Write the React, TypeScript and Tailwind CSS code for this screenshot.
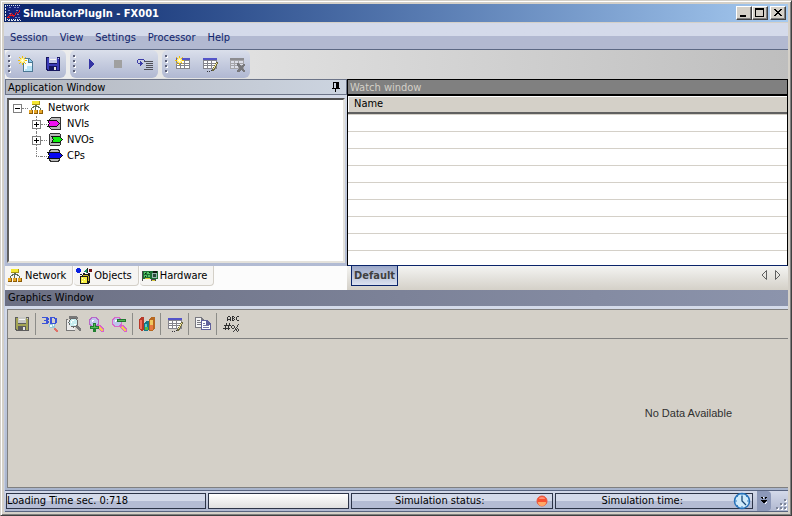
import React from "react";

const menus = ["Session", "View", "Settings", "Processor", "Help"];

const Icon = ({ children, className = "size-4" }: { children: React.ReactNode; className?: string }) => (
  <svg viewBox="0 0 16 16" className={`shrink-0 ${className}`} shapeRendering="crispEdges" aria-hidden="true">
    {children}
  </svg>
);

const Logo = () => (
  <Icon>
    <rect x="2" y="1" width="14" height="13" fill="#14247c" />
    <path d="M0 .5h16M0 14.5h16" stroke="#dfe3f0" strokeDasharray="1 1" />
    <path d="M.5 0v16M2.5 15.5h13" stroke="#dfe3f0" strokeDasharray="2 1" />
    <path d="M4 2.5h3M9 2.5h6M3 5.5h3M11 5.5h4M4 8.5h2M12 9.5h3M10 12.5h5" stroke="#7484c4" strokeDasharray="2 1" />
    <path d="M2 12h1v1H2zM3 11h1v1H3zM4 10h1v1H4zM5 9h1v1H5zM6 8h1v1H6zM7 9h1v2H7zM8 11h1v1H8zM9 10h1v1H9zM10 8h1v2h-1zM11 7h1v1h-1zM12 8h1v1h-1zM13 7h1v1h-1zM14 5h1v2h-1zM3 12h2v1H3zM5 10h2v1H5zM8 10h1v1H8z" fill="#f01818" />
  </Icon>
);

const Spark = () => (
  <>
    <path d="M4 0h1v9H4zM0 4h9v1H0z" fill="#f0c000" />
    <path d="M1 1h1v1H1zM2 2h1v1H2zM6 2h1v1H6zM7 1h1v1H7zM2 6h1v1H2zM1 7h1v1H1zM6 6h1v1H6zM7 7h1v1H7z" fill="#e8b820" />
    <path d="M3 2h3v5H3zM2 3h5v3H2z" fill="#fff080" />
    <path d="M4 3h1v3H4zM3 4h3v1H3z" fill="#fffde0" />
  </>
);

const NewIcon = () => (
  <Icon>
    <path d="M5 2h6l4 4v10H5z" fill="#4c7894" />
    <path d="M6 3h4v4h4v8H6z" fill="#f2fbff" />
    <path d="M9 10h5v5H7v-2h2z" fill="#b8e4f8" />
    <path d="M11 3l3 3h-3z" fill="#8cc8e8" />
    <Spark />
  </Icon>
);

const SaveIcon = ({ frame = "#16165e", body = "#3c3cb8", label = "#c8cce8" }) => (
  <Icon>
    <path d="M1 1h14v14H2l-1-1z" fill={frame} />
    <path d="M2 2h12v12H3l-1-1z" fill={body} />
    <path d="M4 1h8v7H4z" fill={frame} />
    <path d="M4 1h8v6H4z" fill={label} />
    <path d="M5 3h6v1H5z" fill="#f4f4f4" />
    <path d="M4 10h8v5H4z" fill={frame} />
    <path d="M9 11h2v3H9z" fill="#e4e4e4" />
    <path d="M13 2h1v1h-1z" fill="#d0d0e8" />
  </Icon>
);

const PlayIcon = () => (
  <Icon>
    <path d="M6 3l5 5-5 5z" fill="#3434a4" />
  </Icon>
);

const StopIcon = () => (
  <Icon>
    <path d="M4 4h8v8H4z" fill="#a0a0a0" />
  </Icon>
);

const StepIcon = () => (
  <Icon>
    <path d="M1 3h6v1H1zM0 4h1v3H0zM1 7h5v1H1zM3 5h1v5H3zM4 6h1v3H4zM7 4h1v1H7z" fill="#3c3ca8" />
    <path d="M7 5h9v1H7zM9 7h7v1H9zM9 9h7v1H9zM9 11h7v1H9zM7 13h9v1H7z" fill="#505058" />
  </Icon>
);

const Grid = ({ line = "#84848c", head = "#5454c8", cell = "#fff" }) => (
  <>
    <path d="M1 2h14v11H1z" fill={line} />
    <path d="M1 2h14v2H1z" fill={head} />
    <path
      d="M2 5h3v2H2zM6 5h3v2H6zM10 5h4v2h-4zM2 8h3v1H2zM6 8h3v1H6zM10 8h4v1h-4zM2 10h3v2H2zM6 10h3v2H6zM10 10h4v2h-4z"
      fill={cell}
    />
  </>
);

const TableNewIcon = () => (
  <Icon>
    <Grid />
    <Spark />
  </Icon>
);

const TableEditIcon = () => (
  <Icon>
    <Grid />
    <path d="M14 6h2v2h-1v2h-1v2h-1v2h-1v1h-2v-2h1v-2h1V9h1V7h1z" fill="#6c6840" />
    <path d="M14 7h1v1h-1zM13 8h1v2h-1zM12 10h1v2h-1zM11 12h1v1h-1z" fill="#f0e498" />
    <path d="M5 15h1v1H5zM7 15h1v1H7zM9 14h1v1H9z" fill="#34343c" />
  </Icon>
);

const TableDeleteIcon = () => (
  <Icon>
    <Grid line="#a4a4a8" head="#8c8c90" cell="#dcdee8" />
    <path
      d="M8 7h2v1h1v1h1v1h1V9h1V8h2v2h-1v1h-1v2h1v1h1v2h-2v-1h-1v-1h-1v1h-1v1H8v-2h1v-1h1v-2H9v-1H8z"
      fill="#78787c"
    />
  </Icon>
);

const NetworkIcon = () => (
  <Icon>
    <path d="M7 5h2v2H7zM5 6h2v1H5zM9 6h2v1H9zM4 7h1v1H4zM11 7h1v1h-1zM7 7h1v3H7zM3 8h1v2H3zM12 8h1v2h-1zM5 7h1v1H5zM10 7h1v1h-1z" fill="#5c6c58" />
    <path d="M4 1h8v4H4z" fill="#a89410" />
    <path d="M4 1h7v3H4z" fill="#f4e830" />
    <path d="M1 10h4v4H1zM6 10h4v4H6zM11 10h4v4h-4z" fill="#8c5c08" />
    <path d="M1 10h3v3H1zM6 10h3v3H6zM11 10h3v3h-3z" fill="#e8a828" />
  </Icon>
);

const boxes: Record<string, string> = {
  in: "M4.5 1.5h9v12h-9l-2-2v-8z",
  out: "M2.500 2.500l1-1h9l1 1v10l-1 1h-9l-1-1z",
  cp: "M3.5 1.5h8l1 2v8l-1 2h-8l-1-2v-8z",
};

const arrows: Record<string, string> = {
  in: "M.5 4.500h9L12.500 7.500l-3 3H.5l2-3z",
  out: "M4.5 4.500h8l3 3-3 3h-8l2-3z",
  cp: "M.5 4.500h12l3 3-3 3H.5l2-3z",
};

const VarIcon = ({ fill, kind }: { fill: string; kind: string }) => (
  <Icon>
    <path d={boxes[kind]} fill="#b8b8b8" stroke="#303030" />
    <path d={arrows[kind]} fill={fill} stroke="#101010" />
  </Icon>
);

const ObjectsIcon = () => (
  <Icon>
    <path d="M1 0h3v1h1v3H4v1H1V4H0V1h1z" fill="#0820e0" />
    <path d="M10 1h1v4h-1zM9 2h1v2H9zM8 3h1v1H8z" fill="#189060" />
    <path d="M11 0h1v5h-1z" fill="#202020" />
    <path d="M13 1h3v3h-3z" fill="#701010" />
    <path d="M4 6h2v1H4zM7 5h2v2H7zM12 5h2v2h-2z" fill="#202020" />
    <path d="M5 8l2-2h7v8l-2 2H4V8z" fill="#181818" />
    <path d="M5 9h6v6H5z" fill="#f8f040" />
    <path d="M7 7h5l-1 1H6zM12 8h1v5h-1z" fill="#c8b820" />
    <path d="M6 10h1v1H6zM8 11h1v1H8zM6 13h1v1H6z" fill="#fffce0" />
  </Icon>
);

const HardwareIcon = () => (
  <Icon>
    <path d="M1 3h15v8H1z" fill="#1c7034" />
    <path d="M0 3h1v10H0zM9 11h5v2H9z" fill="#484848" />
    <path d="M2 4h2v2H2zM5 4h3v2H5zM2 7h3v2H2zM6 7h2v2H6z" fill="#58c468" />
    <path d="M3 5h1v1H3zM7 4h1v1H7zM3 8h1v1H3zM11 3h4v2h-4z" fill="#101810" />
    <path d="M10 5h5v5h-5z" fill="#98b8b0" />
    <path d="M11 6h3v3h-3z" fill="#284838" />
    <path d="M3 10h5v1H3zM10 12h3v1h-3z" fill="#d8c838" />
  </Icon>
);

const Lens = ({ ring }: { ring: string }) => (
  <>
    <circle cx="6" cy="6" r="4.5" fill="#c0c4ec" stroke={ring} strokeWidth="1.5" />
    <path d="M4 4h2v1H5v1H4z" fill="#fff" />
  </>
);

const ThreeDIcon = () => (
  <Icon>
    <path d="M0 1h6v1H0zM4 2h3v2H4zM2 4h4v1H2zM4 5h3v2H4zM0 7h6v1H0zM8 1h5v1H8zM8 2h2v6H8zM12 2h3v1h-3zM13 3h2v4h-2zM10 7h4v1h-4z" fill="#3c54d8" />
    <path d="M7 8h6v4H9l-2-1z" fill="#98c8d8" />
    <path d="M8 9h2v2H8zM11 8h1v2h-1z" fill="#f0ffff" />
    <path d="M12 12h2v1h1v1h1v2h-2v-1h-1v-1h-1z" fill="#e07068" />
  </Icon>
);

const ZoomIcon = () => (
  <Icon>
    <path d="M1 3h2v11h7v1H1zM4 0h7l2 2v1H4z" fill="#787878" />
    <path d="M2 4h8v10H2z" fill="#ececec" />
    <circle cx="8.5" cy="6.5" r="4.5" fill="#c8eef0" stroke="#686868" />
    <path d="M7 4h2v1H7zM6 5h1v2H6zM9 8h2v1H9z" fill="#fff" />
    <path d="M12 9l4 4v2h-2l-3-4z" fill="#787878" />
  </Icon>
);

const ZoomInIcon = () => (
  <Icon>
    <Lens ring="#b868c8" />
    <path d="M9 9h3l4 4v2l-1 1h-2l-4-4z" fill="#d860d0" />
    <path d="M11 10l4 4-1 1-4-3z" fill="#f4c850" />
    <path d="M5 7h3v3h3v3H8v3H5v-3H2v-3h3z" fill="#208030" />
    <path d="M6 8h1v3h3v1H3v-1h3z" fill="#58b858" />
  </Icon>
);

const ZoomOutIcon = () => (
  <Icon>
    <Lens ring="#d868c8" />
    <path d="M9 9h3l4 4v2l-1 1h-2l-4-4z" fill="#d860d0" />
    <path d="M11 10l4 4-1 1-4-3z" fill="#f4c850" />
    <path d="M6 3h9v3H6z" fill="#207830" />
    <path d="M7 4h7v1H7z" fill="#58b858" />
  </Icon>
);

const ChartIcon = () => (
  <Icon>
    <path d="M0 3l2-2h3v12l-2 2-3-2z" fill="#b83828" />
    <path d="M1 4h2v9H1z" fill="#f07060" />
    <path d="M5 7l2-2h3v9l-2 1H5z" fill="#187888" />
    <path d="M6 8h2v6H6z" fill="#58c8d8" />
    <path d="M6 11h3v3H6z" fill="#58b840" />
    <path d="M10 3l2-2h4v11l-3 3h-3z" fill="#b86820" />
    <path d="M11 4h3v5h-3z" fill="#f0c860" />
    <path d="M11 9h3v5h-3z" fill="#e87840" />
  </Icon>
);

const CopyIcon = () => (
  <Icon>
    <path d="M0 1h6l3 3v8H0z" fill="#787880" />
    <path d="M1 2h5v3h2v6H1z" fill="#f4f4f4" />
    <path d="M2 4h3v1H2zM2 6h4v1H2zM2 8h4v1H2z" fill="#787880" />
    <path d="M6 4h6l4 4v6H6z" fill="#60609c" />
    <path d="M7 5h4v4h4v4H7z" fill="#fff" />
    <path d="M8 7h2v1H8zM8 9h6v1H8zM8 11h6v1H8z" fill="#7878a8" />
  </Icon>
);

// number format: small caps over a hash and a percent sign
const FormatIcon = () => (
  <Icon>
    <path
      d="M5 0h2v1H5zM4 1h1v4H4zM7 1h1v4H7zM5 3h2v1H5zM9 0h2v1H9zM9 1h1v4H9zM11 1h1v1h-1zM10 2h1v1h-1zM11 3h1v1h-1zM10 4h1v1h-1zM14 0h2v1h-2zM13 1h1v3h-1zM14 4h2v1h-2z"
      fill="#303030"
    />
    <path d="M1 9h7v1H1zM0 12h7v1H0zM3 7h1v3H3zM2 10h1v4H2zM6 7h1v3H6zM5 10h1v4H5z" fill="#303030" />
    <path d="M9 9h2v1H9zM9 12h2v1H9zM8 10h1v2H8zM11 10h1v2h-1zM15 8h1v1h-1zM14 9h1v2h-1zM13 11h1v1h-1zM12 12h1v2h-1zM11 14h1v1h-1zM10 15h1v1h-1zM14 12h1v1h-1zM14 15h1v1h-1zM13 13h1v2h-1zM15 13h1v2h-1z" fill="#404040" />
  </Icon>
);

const PinIcon = () => (
  <svg width="8" height="11" viewBox="0 0 8 11" shapeRendering="crispEdges" aria-hidden="true">
    <path d="M1 0h6v6h1v1H4v3H3V7H0V6h1zM2 1v5h2V1z" fillRule="evenodd" />
  </svg>
);

const ClockIcon = () => (
  <svg viewBox="0 0 18 18" className="size-[18px]" aria-hidden="true">
    <circle cx="9" cy="9" r="7.5" fill="#cfeafa" stroke="#2470b8" strokeWidth="1.5" />
    <path d="M9 2v2M9 14v2M2 9h2M14 9h2M4 4l1 1M14 4l-1 1M4 14l1-1" stroke="#3c84c4" />
    <path d="M9 4v5l4 4" fill="none" stroke="#184878" strokeWidth="1.3" />
  </svg>
);

const Grip = () => (
  <svg width="4" height="19" viewBox="0 0 4 19" shapeRendering="crispEdges" className="shrink-0" aria-hidden="true">
    <path d="M1 1h2v2H1zM1 6h2v2H1zM1 11h2v2H1zM1 16h2v2H1z" fill="#fff" />
    <path d="M0 0h2v2H0zM0 5h2v2H0zM0 10h2v2H0zM0 15h2v2H0z" fill="#5c6078" />
  </svg>
);

const ToolButton = ({ label, children }: { label: string; children: React.ReactNode }) => (
  <button aria-label={label} className="flex h-6 w-[27px] items-center justify-center">
    {children}
  </button>
);

const ToolGroup = ({ children }: { children: React.ReactNode }) => (
  <div className="flex h-7 items-center rounded-md bg-linear-to-b from-[#dadfeb] to-[#b0b8d2] pl-[3px]">
    <Grip />
    {children}
  </div>
);

const GraphButton = ({ label, children }: { label: string; children: React.ReactNode }) => (
  <button aria-label={label} className="flex h-6 w-[23px] items-center justify-center">
    {children}
  </button>
);

const Divider = () => <span className="mx-[2px] h-[22px] w-px bg-[#8c8c88]" />;

const WindowButton = ({ label, d }: { label: string; d: string }) => (
  <button
    aria-label={label}
    className="h-3.5 w-4 border border-t-white border-r-[#404040] border-b-[#404040] border-l-white bg-[#d4d0c8] shadow-[inset_-1px_-1px_#808080]"
  >
    <svg viewBox="0 0 14 12" width="14" height="12" shapeRendering="crispEdges" aria-hidden="true">
      <path d={d} fillRule="evenodd" />
    </svg>
  </button>
);

const Expander = ({ open }: { open?: boolean }) => (
  <button aria-label={open ? "Collapse" : "Expand"} className="z-10 size-[9px] shrink-0 border border-[#808080] bg-white">
    <svg viewBox="0 0 7 7" width="7" height="7" shapeRendering="crispEdges" aria-hidden="true">
      <path d={open ? "M1 3h5v1H1z" : "M1 3h5v1H1zM3 1h1v5H3z"} />
    </svg>
  </button>
);

const nodes = [
  { name: "NVIs", fill: "#f010f0", kind: "in", leaf: false },
  { name: "NVOs", fill: "#10f010", kind: "out", leaf: false },
  { name: "CPs", fill: "#0808f0", kind: "cp", leaf: true },
];

const Tree = () => (
  <ul className="pl-1">
    <li>
      <div className="flex h-4 items-center">
        <Expander open />
        <span className="w-1.5 border-t border-dotted border-[#808080]" />
        <NetworkIcon />
        <span className="ml-1">Network</span>
      </div>
      <ul className="pl-[19px]">
        {nodes.map((n) => (
          <li key={n.name} className="relative flex h-4 items-center">
            <span className={`absolute top-0 left-1 border-l border-dotted border-[#808080] ${n.leaf ? "h-2" : "h-4"}`} />
            {n.leaf ? <span className="ml-1 w-[5px] border-t border-dotted border-[#808080]" /> : <Expander />}
            <span className="w-1.5 border-t border-dotted border-[#808080]" />
            <VarIcon fill={n.fill} kind={n.kind} />
            <span className="ml-1">{n.name}</span>
          </li>
        ))}
      </ul>
    </li>
  </ul>
);

const ViewTab = ({ label, children }: { label: string; children: React.ReactNode }) => (
  <button
    role="tab"
    className="flex h-5 items-center gap-[2px] rounded-b border-r border-b border-[#d4d0c8] bg-[#f6f5f3] pr-1.5 pl-[2px]"
  >
    {children}
    {label}
  </button>
);

const ApplicationWindow = () => (
  <section className="flex w-[342px] shrink-0 flex-col bg-linear-to-b from-[#d8deea] to-[#acb6d0]">
    <header className="flex h-4 items-center justify-between border border-[#6c7488] bg-linear-to-r from-[#b4b8c0] to-[#ccd4e0] pr-1.5 pl-[2px]">
      <h2 className="pt-px">Application Window</h2>
      <button aria-label="Auto hide">
        <PinIcon />
      </button>
    </header>
    <div className="mx-[2px] my-[3px] flex-1 border-2 border-t-[#505050] border-r-[#e4e2dc] border-b-[#e4e2dc] border-l-[#606060] bg-white">
      <Tree />
    </div>
    <div role="tablist" className="flex h-6 items-start gap-px bg-[#fcfcfc]">
      <ViewTab label="Network">
        <NetworkIcon />
      </ViewTab>
      <ViewTab label="Objects">
        <ObjectsIcon />
      </ViewTab>
      <ViewTab label="Hardware">
        <HardwareIcon />
      </ViewTab>
    </div>
  </section>
);

const WatchWindow = () => (
  <section className="flex min-w-0 flex-1 flex-col">
    <div className="flex flex-1 flex-col border border-b-[#0a246a] border-t-black border-r-black border-l-black bg-white">
      <h2 className="h-4 border-b-2 border-black bg-[#808080] pl-[2px] leading-[15px] text-[#d4d0c8]">Watch window</h2>
      <table className="w-full border-collapse">
        <thead>
          <tr className="h-4">
            <th className="border-b-2 border-[#606060] bg-[#d4d0c8] p-0 pl-1.5 text-left leading-4 font-normal shadow-[inset_1px_1px_white]">
              Name
            </th>
          </tr>
        </thead>
        <tbody>
          <tr className="h-px border-b border-[#d4d0c8]">
            <td className="p-0" />
          </tr>
          {[1, 2, 3, 4, 5, 6, 7, 8].map((r) => (
            <tr key={r} className="h-[17px] border-b border-[#d4d0c8]">
              <td className="p-0" />
            </tr>
          ))}
        </tbody>
      </table>
    </div>
    <div className="flex h-6 items-start bg-linear-to-b from-[#f4f4f2] to-[#d4d0c8] pr-[7px] pl-1">
      <button className="h-5 border border-t-0 border-[#0a246a] bg-linear-to-b from-[#9ca8c8] to-[#dce2f0] px-[2px] font-bold text-[#404040]">
        Default
      </button>
      <div className="ml-auto flex gap-2 pt-1">
        <button aria-label="Previous">
          <svg width="6" height="10" viewBox="0 0 6 10" aria-hidden="true">
            <path d="M5.5 .5v9L1 5z" fill="none" stroke="#606060" />
          </svg>
        </button>
        <button aria-label="Next">
          <svg width="6" height="10" viewBox="0 0 6 10" aria-hidden="true">
            <path d="M.5 .5v9L5 5z" fill="none" stroke="#606060" />
          </svg>
        </button>
      </div>
    </div>
  </section>
);

const GraphicsWindow = () => (
  <section className="flex flex-1 flex-col bg-linear-to-b from-[#d8deec] to-[#a8b4cc]">
    <h2 className="h-4 bg-linear-to-r from-[#6c7084] to-[#8c94ac] pl-[3px] leading-4">Graphics Window</h2>
    <div className="mt-[3px] mb-[2px] ml-[2px] flex flex-1 flex-col border border-r-0 border-[#808080] bg-[#d4d0c8]">
      <div className="flex h-[29px] items-center border-b border-[#808080] pl-[2px]">
        <GraphButton label="Save graph">
          <SaveIcon frame="#5c5c5c" body="#a4a454" label="#c8c8c4" />
        </GraphButton>
        <Divider />
        <GraphButton label="3D">
          <ThreeDIcon />
        </GraphButton>
        <GraphButton label="Zoom">
          <ZoomIcon />
        </GraphButton>
        <GraphButton label="Zoom in">
          <ZoomInIcon />
        </GraphButton>
        <GraphButton label="Zoom out">
          <ZoomOutIcon />
        </GraphButton>
        <Divider />
        <GraphButton label="Chart type">
          <ChartIcon />
        </GraphButton>
        <Divider />
        <GraphButton label="Edit data">
          <TableEditIcon />
        </GraphButton>
        <Divider />
        <GraphButton label="Copy">
          <CopyIcon />
        </GraphButton>
        <Divider />
        <GraphButton label="Format">
          <FormatIcon />
        </GraphButton>
      </div>
      <div className="flex flex-1 items-center justify-end pr-14 font-['Liberation_Sans',sans-serif] text-[#303030]">
        No Data Available
      </div>
    </div>
  </section>
);

const panel = "flex h-4 items-center border border-[#2c3448] bg-linear-to-b from-[#d4daea] from-50% to-[#b4bcd4] to-50%";

const StatusBar = () => (
  <footer className="flex h-[22px] items-center gap-[2px] border-y border-[#586480] bg-linear-to-b from-[#d4daea] to-[#b0b8d0] pl-px">
    <div className={`${panel} w-[200px]`}>Loading Time sec. 0:718</div>
    <div className="h-4 w-[141px] border border-[#2c3448] bg-linear-to-b from-white to-[#e0e0e0]" />
    <div className={`${panel} flex-1 pr-1`}>
      <span className="flex-1 pr-2 text-center">Simulation status:</span>
      <svg width="12" height="12" viewBox="0 0 12 12" aria-hidden="true">
        <circle cx="6" cy="6" r="5" fill="#f85030" stroke="#e85840" />
        <path d="M2 7h8a4 4 0 0 1-8 0z" fill="#ffa868" />
        <path d="M3 4a3 2 0 0 1 6 0z" fill="#ff9078" />
      </svg>
    </div>
    <div className={`${panel} flex-1 pr-px`}>
      <span className="flex-1 pr-1 text-center">Simulation time:</span>
      <ClockIcon />
    </div>
    <button aria-label="More" className="ml-[2px] flex h-5 w-3.5 items-center justify-center rounded-r bg-[#8c98b8]">
      <svg width="8" height="10" viewBox="0 0 8 10" shapeRendering="crispEdges" aria-hidden="true">
        <path d="M1 1h2v1H1zM5 1h2v1H5zM2 2h1v1H2zM5 2h1v1H5zM1 4h6v1H1zM2 5h4v1H2zM3 6h2v1H3z" />
        <path d="M3 1h1v1H3zM6 6h1v1H6zM5 7h1v1H5z" fill="#fff" />
      </svg>
    </button>
    <svg width="12" height="12" viewBox="0 0 12 12" className="ml-[3px] self-end" shapeRendering="crispEdges" aria-hidden="true">
      <path d="M9 1h2v2H9zM5 5h2v2H5zM9 5h2v2H9zM1 9h2v2H1zM5 9h2v2H5zM9 9h2v2H9z" fill="#fff" />
      <path d="M8 0h2v2H8zM4 4h2v2H4zM8 4h2v2H8zM0 8h2v2H0zM4 8h2v2H4zM8 8h2v2H8z" fill="#7c8498" />
    </svg>
  </footer>
);

export default function App() {
  return (
    <main className="flex min-h-screen flex-col border border-t-[#d4d0c8] border-r-[#404040] border-b-[#404040] border-l-[#d4d0c8] bg-[#d4d0c8] px-[3px] pt-[3px] pb-[3px] font-['DejaVu_Sans_Condensed','DejaVu_Sans',sans-serif] text-[11px] leading-[14px] text-black shadow-[inset_1px_1px_white,inset_-1px_-1px_#808080] [font-stretch:condensed]">
      <header className="flex h-[18px] items-center bg-linear-to-r from-[#0a246a] to-[#a6caf0] pr-[2px] pl-px">
        <Logo />
        <h1 className="ml-[2px] flex-1 pt-px font-bold text-white">SimulatorPlugIn - FX001</h1>
        <WindowButton label="Minimize" d="M3 8h6v2H3z" />
        <WindowButton label="Maximize" d="M2 1h9v9H2zM3 3v6h7V3z" />
        <span className="w-[2px]" />
        <WindowButton label="Close" d="M3 2h2v1h1v1h2V3h1V2h2v1h-1v1H9v1H8v1h1v1h1v1h1v1H9V8H8V7H6v1H5v1H3V8h1V7h1V6h1V5H5V4H4V3H3z" />
      </header>
      <nav className="mt-px flex h-[27px] items-center gap-3 border-b border-[#5c6884] bg-linear-to-b from-[#d4daea] from-50% to-[#b2b9d1] to-50% pt-[3px] pl-1.5 text-[#10246c]">
        {menus.map((m) => (
          <button key={m}>{m}</button>
        ))}
      </nav>
      <div className="flex flex-1 flex-col bg-[#c4cce0] pl-px">
        <div className="flex h-[29px] items-start gap-1 bg-linear-to-r from-[#f0f0f0] to-[#bebebe]">
          <ToolGroup>
            <ToolButton label="New"><NewIcon /></ToolButton>
            <ToolButton label="Save"><SaveIcon /></ToolButton>
          </ToolGroup>
          <ToolGroup>
            <ToolButton label="Run"><PlayIcon /></ToolButton>
            <ToolButton label="Stop"><StopIcon /></ToolButton>
            <ToolButton label="Step"><StepIcon /></ToolButton>
          </ToolGroup>
          <ToolGroup>
            <ToolButton label="New table"><TableNewIcon /></ToolButton>
            <ToolButton label="Edit table"><TableEditIcon /></ToolButton>
            <ToolButton label="Delete table"><TableDeleteIcon /></ToolButton>
          </ToolGroup>
        </div>
        <div className="flex h-[211px] bg-[#d4daea]">
          <ApplicationWindow />
          <WatchWindow />
        </div>
        <GraphicsWindow />
        <StatusBar />
      </div>
    </main>
  );
}
